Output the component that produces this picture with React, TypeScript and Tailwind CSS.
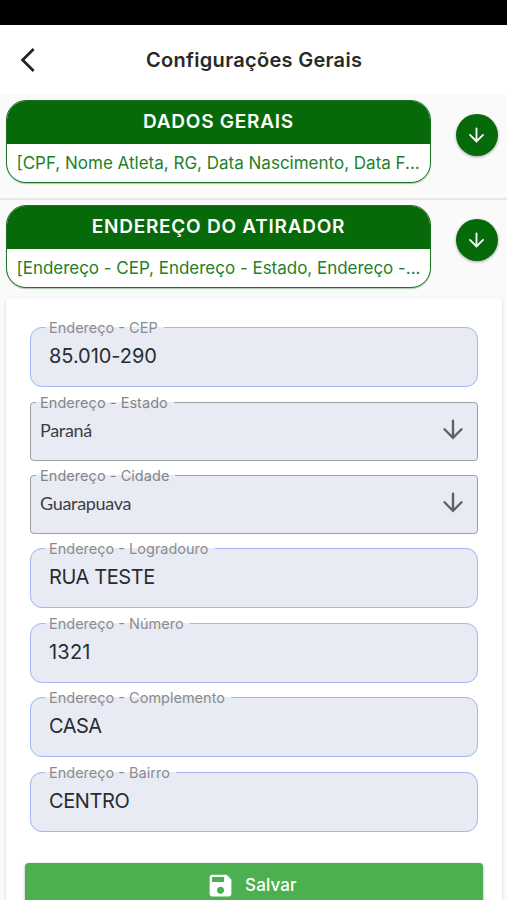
import React from "react";

function ArrowDown({ className }: { className: string }) {
  return (
    <svg viewBox="0 0 24 24" className={className} fill="none" stroke="currentColor" strokeWidth="1.9" strokeLinecap="round" strokeLinejoin="miter">
      <path d="M12 4.6v13.4M5.2 11.4L12 18.2L18.8 11.4" />
    </svg>
  );
}

function Section({ title, summary, titleClass, summaryClass }: { title: string; summary: string; titleClass: string; summaryClass: string }) {
  return (
    <div className="flex items-start">
      <div className="ml-[6px] h-[83px] w-[425px] overflow-hidden rounded-[20px] border border-[#1d7320] bg-white shadow-[0_1px_1px_rgba(0,80,0,0.3)]">
        <div className="h-[43px] bg-[#076a0a] text-center text-[19px] leading-[42px] font-semibold text-white">
          <span className={titleClass}>{title}</span>
        </div>
        <div className="pl-[9.5px] text-[17px] leading-[38px] whitespace-nowrap text-[#23802a]">
          <span className={summaryClass}>{summary}</span>
        </div>
      </div>
      <button className="mt-[14px] ml-[24.5px] flex size-[42px] items-center justify-center rounded-full bg-[#076a0a] text-white shadow-[0_1px_3px_rgba(0,0,0,0.35)]">
        <ArrowDown className="size-[23px]" />
      </button>
    </div>
  );
}

function TextField({ label, value, valueClass }: { label: string; value: string; valueClass: string }) {
  return (
    <fieldset className="mb-[7.5px] h-[67px] rounded-[12px] border border-[#a3b8f5] bg-[#e8ebf4] pl-[14px]">
      <legend className="h-[15px] pr-1.5 pl-1 text-[14.5px] leading-[15px] whitespace-nowrap text-[#8b8c90]">
        {label}
      </legend>
      <div className="ml-1 text-[20px] leading-[42px] text-[#292b31]">
        <span className={valueClass}>{value}</span>
      </div>
    </fieldset>
  );
}

function SelectField({ label, value, valueClass }: { label: string; value: string; valueClass: string }) {
  return (
    <fieldset className="mb-[6.75px] h-[66.5px] rounded-[4px] border border-[#a0a0a5] bg-[#e8ebf4] pl-[5px]">
      <legend className="h-[15px] pr-1.5 pl-1 text-[14.5px] leading-[15px] tracking-[0.05px] whitespace-nowrap text-[#85868a]">
        {label}
      </legend>
      <div className="flex h-10 items-center justify-between pr-[9px] pl-1 font-['Lato',sans-serif] text-[18px] leading-[40px] text-[#3d3f45]">
        <span className={valueClass}>{value}</span>
        <ArrowDown className="size-[30px] text-[#606165]" />
      </div>
    </fieldset>
  );
}

export default function App() {
  return (
    <div className="h-[900px] w-[507px] overflow-hidden bg-[#fafafa] font-['Inter',sans-serif]">
      <div className="h-[25px] bg-black" />
      <header className="flex h-[69px] items-center bg-white">
        <svg viewBox="0 0 16 24" className="ml-[20px] h-6 w-4" fill="none" stroke="#242424" strokeWidth="2.8">
          <path d="M13.7 1L2.6 12L13.7 23" />
        </svg>
        <h1 className="ml-[110px] text-[20px] font-semibold text-[#292929]">
          <span className="tracking-[0.3px]">Configurações Gerais</span>
        </h1>
      </header>
      <main>
        <div className="h-[106px] border-b-2 border-[#e7e7e7] pt-[6px]">
          <Section title="DADOS GERAIS" summary="[CPF, Nome Atleta, RG, Data Nascimento, Data F..." titleClass="tracking-[0.75px]" summaryClass="tracking-[0px]" />
        </div>
        <div className="pt-[5px]">
          <Section title="ENDEREÇO DO ATIRADOR" summary="[Endereço - CEP, Endereço - Estado, Endereço -..." titleClass="tracking-[0.75px]" summaryClass="tracking-[-0.02px]" />
        </div>
        <section className="mt-[10px] ml-[6px] h-[620px] w-[496px] rounded-[4px] bg-white pt-[22px] shadow-[0_1px_3px_rgba(0,0,0,0.18)]">
          <div className="ml-[24px] w-[447.5px]">
            <TextField label="Endereço - CEP" value="85.010-290" valueClass="tracking-[-0.05px]" />
            <SelectField label="Endereço - Estado" value="Paraná" valueClass="tracking-[-0.3px]" />
            <SelectField label="Endereço - Cidade" value="Guarapuava" valueClass="tracking-[-0.3px]" />
            <TextField label="Endereço - Logradouro" value="RUA TESTE" valueClass="tracking-[-0.4px]" />
            <TextField label="Endereço - Número" value="1321" valueClass="tracking-[0.2px]" />
            <TextField label="Endereço - Complemento" value="CASA" valueClass="tracking-[-0.5px]" />
            <TextField label="Endereço - Bairro" value="CENTRO" valueClass="tracking-[-0.4px]" />
          </div>
          <button className="mt-[31.5px] ml-[19px] flex h-[44px] w-[458px] items-center rounded-[4px] bg-[#4caf50] pl-[181px] text-white shadow-[0_1px_3px_rgba(0,0,0,0.35)]">
            <svg viewBox="0 0 24 24" className="size-[29px]" fill="currentColor">
              <path d="M17 3H5c-1.11 0-2 .9-2 2v14c0 1.1.89 2 2 2h14c1.1 0 2-.9 2-2V7l-4-4zm-5 16c-1.66 0-3-1.34-3-3s1.34-3 3-3 3 1.34 3 3-1.34 3-3 3zm3-10H5V5h10v4z" />
            </svg>
            <span className="ml-[10px] pt-[2px] text-[17px] font-medium tracking-[0.15px]">Salvar</span>
          </button>
        </section>
      </main>
    </div>
  );
}
